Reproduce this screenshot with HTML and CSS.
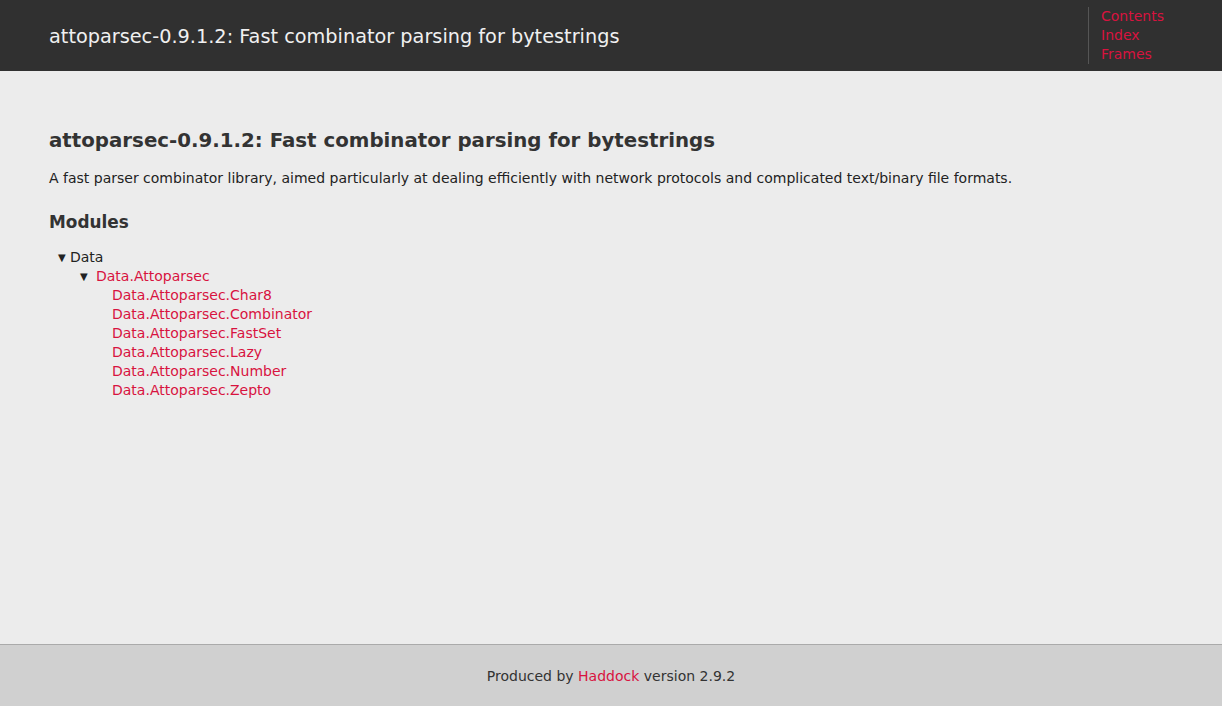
FILE: index.html
```html
<!DOCTYPE html>
<html>
<head>
<meta charset="utf-8">
<title>attoparsec-0.9.1.2: Fast combinator parsing for bytestrings</title>
<link rel="stylesheet" href="styles.css">
</head>
<body>
<div class="page">
  <header class="package-header">
    <p class="caption">attoparsec-0.9.1.2: Fast combinator parsing for bytestrings</p>
    <ul class="links">
      <li><a href="#">Contents</a></li>
      <li><a href="#">Index</a></li>
      <li><a href="#">Frames</a></li>
    </ul>
  </header>
  <main class="content">
    <h1 class="title">attoparsec-0.9.1.2: Fast combinator parsing for bytestrings</h1>
    <p class="doc">A fast parser combinator library, aimed particularly at dealing efficiently with network protocols and complicated text/binary file formats.</p>
    <h2 class="section">Modules</h2>
    <ul class="tree">
      <li>
        <div class="node"><span class="tri">&#9660;</span><span class="label">Data</span></div>
        <ul class="tree sub">
          <li>
            <div class="node"><span class="tri">&#9660;</span><a href="#" class="label">Data.Attoparsec</a></div>
            <ul class="tree leaves">
              <li><a href="#">Data.Attoparsec.Char8</a></li>
              <li><a href="#">Data.Attoparsec.Combinator</a></li>
              <li><a href="#">Data.Attoparsec.FastSet</a></li>
              <li><a href="#">Data.Attoparsec.Lazy</a></li>
              <li><a href="#">Data.Attoparsec.Number</a></li>
              <li><a href="#">Data.Attoparsec.Zepto</a></li>
            </ul>
          </li>
        </ul>
      </li>
    </ul>
  </main>
  <footer class="footer">
    <p>Produced by <a href="#">Haddock</a> version 2.9.2</p>
  </footer>
</div>
</body>
</html>
```
FILE: styles.css
```css
html, body {
  margin: 0;
  padding: 0;
  height: 100%;
}
body {
  background: #ececec;
  color: #222;
  font-family: "DejaVu Sans", Verdana, sans-serif;
  font-size: 14px;
}
a {
  color: #d8133f;
  text-decoration: none;
}
.page {
  min-height: 100%;
  display: flex;
  flex-direction: column;
}
.package-header {
  background: #303030;
  height: 71px;
  display: flex;
  align-items: center;
  justify-content: space-between;
  padding: 0 49px;
  box-sizing: border-box;
}
.caption {
  margin: 2px 0 0;
  color: #f0f0f0;
  font-size: 19.3px;
}
.links {
  list-style: none;
  margin: 0;
  padding: 0 0 0 12px;
  border-left: 1px solid #555;
  font-size: 14px;
  line-height: 19px;
  align-self: center;
  width: 120px;
  box-sizing: border-box;
  position: relative;
  left: 35px;
}
.content {
  flex: 1;
  padding: 38px 49px 0;
}
.title {
  margin: 19px 0 0;
  font-size: 19.8px;
  line-height: 26px;
  color: #333;
}
.doc {
  margin: 15px 0 0;
  line-height: 19px;
}
.section {
  margin: 23px 0 0;
  font-size: 16.9px;
  line-height: 22px;
  color: #333;
}
.tree {
  list-style: none;
  margin: 0;
  padding: 0;
  line-height: 19px;
}
.content > .tree {
  margin-top: 15px;
  padding-left: 9px;
}
.sub { padding-left: 22px; }
.leaves { padding-left: 32px; }
.node { display: flex; align-items: center; }
.tri {
  font-size: 10px;
  width: 12px;
  color: #222;
}
.sub .tri { width: 16px; }
.footer {
  background: #d0d0d0;
  border-top: 1px solid #aaa;
  height: 61px;
  display: flex;
  align-items: center;
  justify-content: center;
}
.footer p { margin: 0; color: #333; }
```
